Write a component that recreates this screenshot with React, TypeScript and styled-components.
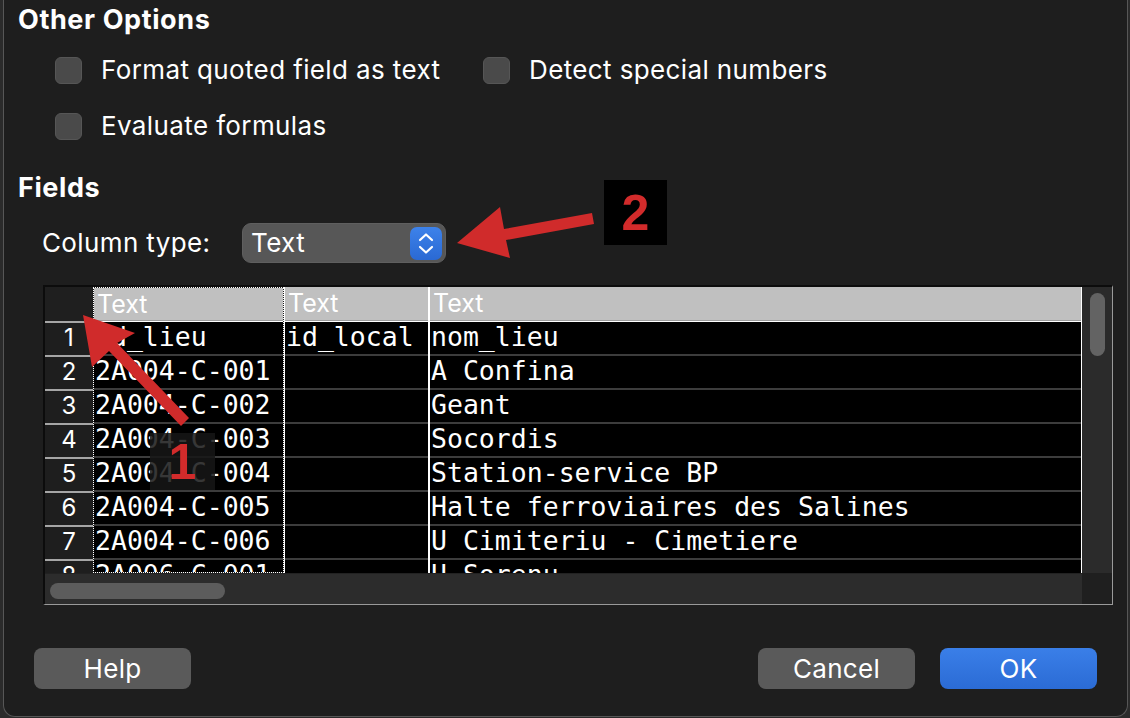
import React from "react";
import styled, { createGlobalStyle } from "styled-components";

const Global = createGlobalStyle`
  html, body { margin: 0; padding: 0; background: #2b2b2b; }
  body { font-family: Inter, "Liberation Sans", sans-serif; -webkit-font-smoothing: antialiased; }
`;

const UI = `Inter, "Liberation Sans", sans-serif`;
const MONO = `"DejaVu Sans Mono", "Liberation Mono", monospace`;

const Page = styled.div`
  position: relative;
  width: 1130px;
  height: 718px;
  overflow: hidden;
  background: #2b2b2b;
`;

const Window = styled.div`
  box-sizing: border-box;
  margin-left: 3px;
  width: 1125px;
  height: 717px;
  background: #1e1e1e;
  border: 1px solid #575757;
  border-top: none;
  border-radius: 0 0 12px 12px;
  padding: 4px 0 0 14px;
  color: #fff;
  display: flex;
  flex-direction: column;
  align-items: flex-start;
`;

const SectionTitle = styled.div<{ $mt: number }>`
  margin-top: ${(p) => p.$mt}px;
  font: 700 27px/32px ${UI};
  letter-spacing: 0.6px;
`;

const OptionsGrid = styled.div`
  margin: 18px 0 0 37px;
  display: grid;
  grid-template-columns: 428px auto;
  row-gap: 24px;
`;

const Option = styled.label`
  display: flex;
  align-items: center;
  gap: 19px;
  height: 32px;
  font: 400 26px/32px ${UI};
  letter-spacing: 0.38px;
`;

const Checkbox = styled.span`
  box-sizing: border-box;
  width: 27px;
  height: 27px;
  border-radius: 6px;
  background: #4a4a4a;
  border: 1px solid #565656;
`;

const TypeRow = styled.div`
  margin: 19px 0 0 24px;
  display: flex;
  align-items: center;
  height: 40px;
`;

const TypeLabel = styled.span`
  width: 200px;
  font: 400 26px/32px ${UI};
  letter-spacing: 0.38px;
`;

const Select = styled.div`
  box-sizing: border-box;
  width: 204px;
  height: 40px;
  border-radius: 9px;
  background: #575757;
  border: 1px solid #5f5f5f;
  display: flex;
  align-items: center;
  justify-content: space-between;
  padding: 0 3px 0 8px;
  font: 400 26px/32px ${UI};
  letter-spacing: 0.38px;
`;

const Stepper = styled.span`
  width: 32px;
  height: 33px;
  border-radius: 7px;
  background: linear-gradient(#3d82ea, #2a69d3);
  display: flex;
  align-items: center;
  justify-content: center;
`;

const Table = styled.div`
  box-sizing: border-box;
  margin: 22px 0 0 25px;
  width: 1070px;
  height: 320px;
  border-top: 2px solid #0c0c0c;
  border-left: 2px solid #0c0c0c;
  border-right: 1px solid #9a9a9a;
  border-bottom: 1px solid #9a9a9a;
  display: grid;
  grid-template-columns: 1fr 30px;
  grid-template-rows: 1fr 31px;
`;

const Sheet = styled.div`
  display: flex;
  overflow: hidden;
  background: #1e1e1e;
`;

const RowHeaderCol = styled.div`
  width: 48px;
  flex: none;
  display: flex;
  flex-direction: column;
`;

const Corner = styled.div`
  height: 34px;
  flex: none;
  background: #1f1f1f;
`;

const RowNum = styled.div`
  box-sizing: border-box;
  height: 34px;
  flex: none;
  border-top: 2px solid #a6a6a6;
  text-align: center;
  font: 400 24px/29px ${UI};
  color: #fff;
`;

const DataCol = styled.div<{ $w: number; $selected?: boolean }>`
  box-sizing: border-box;
  width: ${(p) => p.$w}px;
  flex: none;
  height: 100%;
  overflow: hidden;
  display: flex;
  flex-direction: column;
  border-left: 1px ${(p) => (p.$selected ? "dotted" : "solid")} #fff;
  border-right: 1px ${(p) => (p.$selected ? "dotted" : "solid")} #fff;
  border-top: ${(p) => (p.$selected ? "1px dotted #fff" : "none")};
  border-bottom: ${(p) => (p.$selected ? "1px dotted #fff" : "none")};
`;

const HeadCell = styled.div<{ $selected?: boolean }>`
  box-sizing: border-box;
  height: ${(p) => (p.$selected ? 33 : 34)}px;
  flex: none;
  background: #c0c0c0;
  color: #fff;
  padding-left: 3px;
  font: 400 25px/32px ${UI};
  border-bottom: 1px solid #9d9d9d;
`;

const Body = styled.div`
  flex: 1;
  background: #000;
  border-top: 1px solid #fff;
`;

const Cell = styled.div`
  box-sizing: border-box;
  height: 34px;
  border-bottom: 2px solid #3c3c3c;
  padding-left: 1px;
  white-space: pre;
  overflow: hidden;
  color: #fff;
  font: 400 26.5px/29px ${MONO};
`;

const VScroll = styled.div`
  background: #2b2b2b;
  padding: 6px 0 0 8px;
`;

const VThumb = styled.div`
  width: 15px;
  height: 63px;
  border-radius: 8px;
  background: #636363;
`;

const HScroll = styled.div`
  background: #2c2c2c;
  border-top: 1px solid #222;
  padding: 9px 0 0 5px;
`;

const HThumb = styled.div`
  width: 175px;
  height: 16px;
  border-radius: 8px;
  background: #5c5c5c;
`;

const ScrollCorner = styled.div`
  background: #1f1f1f;
`;

const ButtonRow = styled.div`
  margin: 43px 0 0 16px;
  width: 1063px;
  display: flex;
  justify-content: space-between;
`;

const ButtonGroup = styled.div`
  display: flex;
  gap: 25px;
`;

const Button = styled.button<{ $primary?: boolean }>`
  width: 157px;
  height: 41px;
  border: none;
  border-radius: 8px;
  background: ${(p) => (p.$primary ? "linear-gradient(#3a7fe8, #2b6bd5)" : "#5a5a5a")};
  color: #fff;
  font: 400 26px/32px ${UI};
  letter-spacing: 0.3px;
  padding: 0;
`;

const Overlay = styled.svg`
  position: absolute;
  left: 0;
  top: 0;
  pointer-events: none;
`;

const Badge = styled.div<{ $x: number; $y: number; $w: number; $h: number; $bg: string }>`
  position: absolute;
  left: ${(p) => p.$x}px;
  top: ${(p) => p.$y}px;
  width: ${(p) => p.$w}px;
  height: ${(p) => p.$h}px;
  background: ${(p) => p.$bg};
  color: #d22b2b;
  display: flex;
  align-items: center;
  justify-content: center;
  font: 700 50px/1 "Liberation Sans", Arial, sans-serif;
`;

const rows: [string, string, string][] = [
  ["id_lieu", "id_local", "nom_lieu"],
  ["2A004-C-001", "", "A Confina"],
  ["2A004-C-002", "", "Geant"],
  ["2A004-C-003", "", "Socordis"],
  ["2A004-C-004", "", "Station-service BP"],
  ["2A004-C-005", "", "Halte ferroviaires des Salines"],
  ["2A004-C-006", "", "U Cimiteriu - Cimetiere"],
  ["2A006-C-001", "", "U Sorenu"],
];

const columns = [
  { w: 191, selected: true },
  { w: 145, selected: false },
  { w: 653, selected: false },
];

export default function App() {
  return (
    <Page>
      <Global />
      <Window>
        <SectionTitle $mt={0}>Other Options</SectionTitle>
        <OptionsGrid>
          <Option>
            <Checkbox />
            Format quoted field as text
          </Option>
          <Option>
            <Checkbox />
            Detect special numbers
          </Option>
          <Option>
            <Checkbox />
            Evaluate formulas
          </Option>
        </OptionsGrid>

        <SectionTitle $mt={30}>Fields</SectionTitle>
        <TypeRow>
          <TypeLabel>Column type:</TypeLabel>
          <Select>
            Text
            <Stepper>
              <svg width="32" height="33" viewBox="0 0 32 33">
                <path d="M10 13 L16 7.5 L22 13" fill="none" stroke="#fff" strokeWidth="2.2" strokeLinecap="round" strokeLinejoin="round" />
                <path d="M10 20 L16 25.5 L22 20" fill="none" stroke="#fff" strokeWidth="2.2" strokeLinecap="round" strokeLinejoin="round" />
              </svg>
            </Stepper>
          </Select>
        </TypeRow>

        <Table>
          <Sheet>
            <RowHeaderCol>
              <Corner />
              {rows.map((_, i) => (
                <RowNum key={i}>{i + 1}</RowNum>
              ))}
            </RowHeaderCol>
            {columns.map((c, ci) => (
              <DataCol key={ci} $w={c.w} $selected={c.selected}>
                <HeadCell $selected={c.selected}>Text</HeadCell>
                <Body>
                  {rows.map((r, ri) => (
                    <Cell key={ri}>{r[ci]}</Cell>
                  ))}
                </Body>
              </DataCol>
            ))}
          </Sheet>
          <VScroll>
            <VThumb />
          </VScroll>
          <HScroll>
            <HThumb />
          </HScroll>
          <ScrollCorner />
        </Table>

        <ButtonRow>
          <Button>Help</Button>
          <ButtonGroup>
            <Button>Cancel</Button>
            <Button $primary>OK</Button>
          </ButtonGroup>
        </ButtonRow>
      </Window>

      <Overlay width="1130" height="718" viewBox="0 0 1130 718">
        <polygon
          points="457,243 500,207 504,229 592,213 594,224 506,240 510,258"
          fill="#d02b2b"
          strokeLinejoin="round"
        />
        <polygon
          points="83,315 135,333 117,343 189,418 181,426 109,351 92,367"
          fill="#d02b2b"
          strokeLinejoin="round"
        />
      </Overlay>
      <Badge $x={150} $y={433} $w={65} $h={57} $bg="rgba(22,22,22,0.86)">1</Badge>
      <Badge $x={604} $y={180} $w={63} $h={65} $bg="#000">2</Badge>
    </Page>
  );
}
